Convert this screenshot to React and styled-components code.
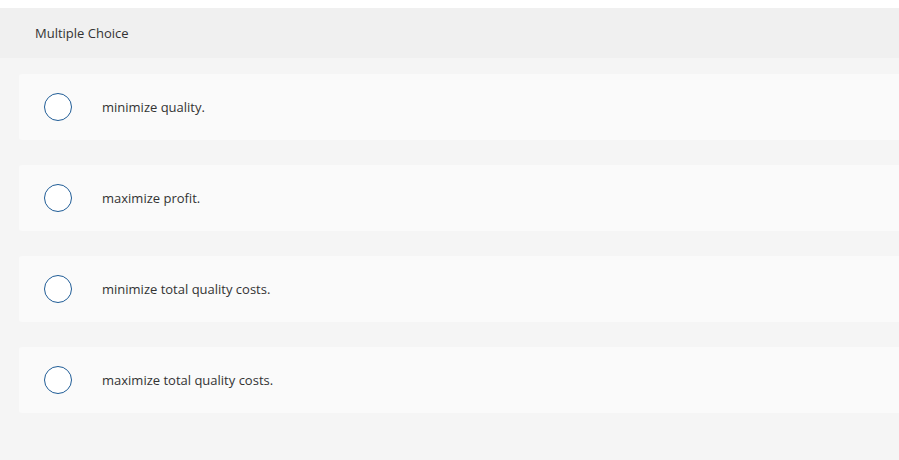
import React from "react";
import styled, { createGlobalStyle } from "styled-components";

const GlobalStyle = createGlobalStyle`
  html, body {
    margin: 0;
    padding: 0;
    background: #ffffff;
  }
  body {
    padding-top: 8px;
    font-family: "Open Sans", "Liberation Sans", sans-serif;
  }
`;

// Question panel
const Panel = styled.section`
  min-height: 452px;
  background-color: #f5f5f5;
  color: #333333;
`;

const Header = styled.header`
  display: flex;
  align-items: center;
  height: 50px;
  padding-left: 35px;
  background-color: #f0f0f0;
  font-size: 13px;
`;

const Choices = styled.ul`
  list-style: none;
  margin: 0;
  padding: 16px 0 0 19px;
  display: flex;
  flex-direction: column;
  gap: 25px;
`;

const Choice = styled.li`
  display: flex;
  align-items: center;
  gap: 30px;
  height: 66px;
  padding-left: 25px;
  background-color: #fafafa;
  border-radius: 3px 0 0 3px;
  font-size: 13px;
`;

const Radio = styled.span`
  box-sizing: border-box;
  flex: none;
  width: 28px;
  height: 28px;
  border-radius: 50%;
  border: 1.5px solid #1f5c96;
  background-color: #ffffff;
`;

const options = [
  "minimize quality.",
  "maximize profit.",
  "minimize total quality costs.",
  "maximize total quality costs.",
];

export default function App() {
  return (
    <>
      <GlobalStyle />
      <Panel>
        <Header>Multiple Choice</Header>
        <Choices>
          {options.map((text) => (
            <Choice key={text}>
              <Radio />
              <span>{text}</span>
            </Choice>
          ))}
        </Choices>
      </Panel>
    </>
  );
}
